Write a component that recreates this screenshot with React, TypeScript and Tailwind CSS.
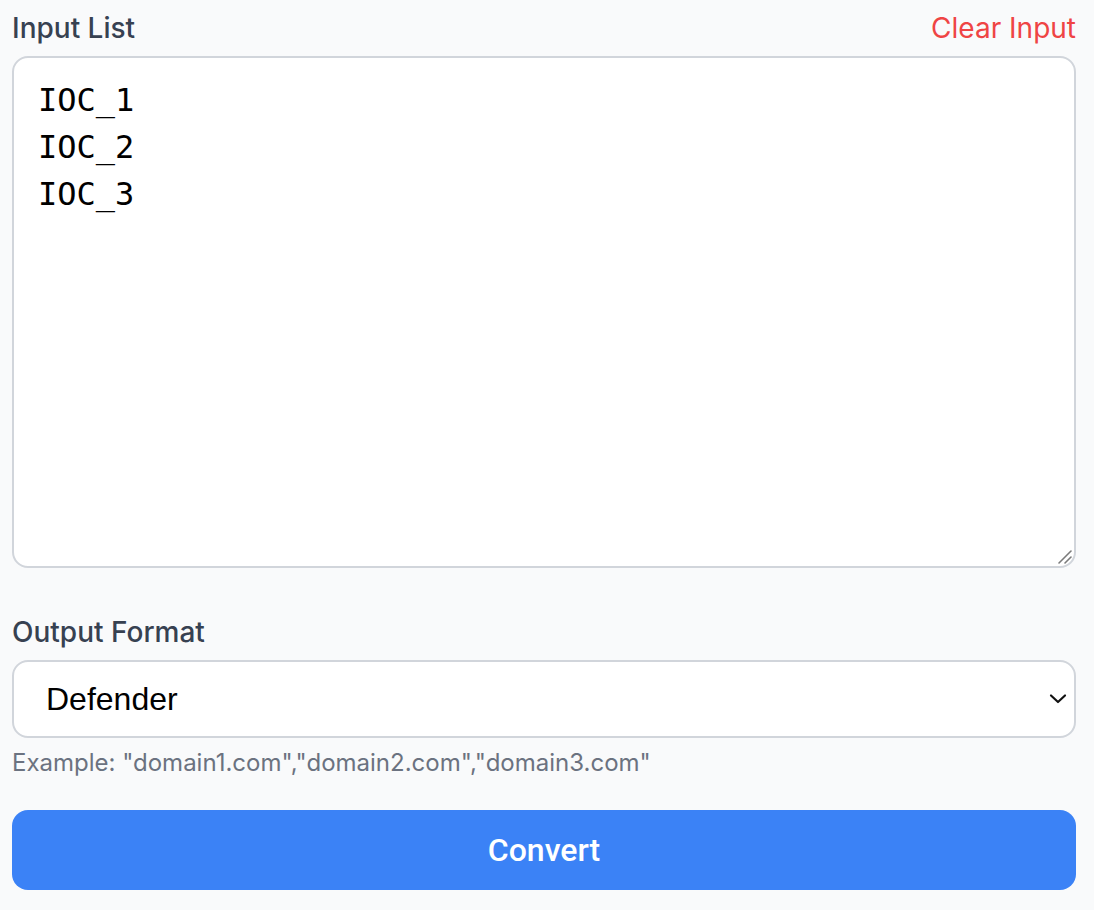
import React from "react";

export default function App() {
  return (
    <div
      className="min-h-[910px] w-full bg-[#f9fafb] pl-[12px] pr-[18px] pt-[8px] pb-[20px]"
      style={{ fontFamily: "Inter, 'Liberation Sans', sans-serif" }}
    >
      <div className="mb-[8px] flex items-center justify-between">
        <label className="text-[28px] leading-[40px] font-medium text-[#374151]">Input List</label>
        <button className="text-[28px] leading-[40px] text-[#ef4444]">Clear Input</button>
      </div>
      <div className="relative">
        <textarea
          className="block h-[512px] w-full resize-none rounded-[16px] border-2 border-[#d1d5db] bg-white px-[24px] pt-[19px] pb-[16px] text-[32px] leading-[47px] text-black outline-none"
          style={{ fontFamily: "'DejaVu Sans Mono', 'Liberation Mono', monospace" }}
          defaultValue={"IOC_1\nIOC_2\nIOC_3"}
        />
        <svg
          className="pointer-events-none absolute right-[3px] bottom-[3px]"
          width="16"
          height="16"
          viewBox="0 0 16 16"
          fill="none"
        >
          <path d="M2 14 L14 2" stroke="#7b7b7b" strokeWidth="1.6" strokeLinecap="round" />
          <path d="M8 14 L14 8" stroke="#7b7b7b" strokeWidth="1.6" strokeLinecap="round" />
        </svg>
      </div>
      <div className="mt-[44px] mb-[8px] text-[28px] leading-[40px] font-medium text-[#374151]">Output Format</div>
      <div className="relative">
        <select
          className="block h-[78px] w-full appearance-none rounded-[16px] border-2 border-[#d1d5db] bg-white pl-[32px] text-[32px] text-black outline-none"
          style={{ fontFamily: "'Liberation Sans', Arial, sans-serif" }}
          defaultValue="Defender"
        >
          <option>Defender</option>
        </select>
        <svg
          className="pointer-events-none absolute right-[9px] top-[33px]"
          width="18"
          height="12"
          viewBox="0 0 18 12"
          fill="none"
        >
          <path d="M2 2.5 L9 9 L16 2.5" stroke="#111" strokeWidth="2.2" strokeLinecap="round" strokeLinejoin="round" />
        </svg>
      </div>
      <p className="mt-[9px] text-[24px] leading-[32px] text-[#6b7280]">
        Example: "domain1.com","domain2.com","domain3.com"
      </p>
      <button
        className="mt-[31px] flex h-[80px] w-full items-center justify-center rounded-[16px] bg-[#3b82f6] text-[32px] font-medium text-white"
        style={{ fontFamily: "Roboto, 'Liberation Sans', Arial, sans-serif" }}
      >
        Convert
      </button>
    </div>
  );
}
